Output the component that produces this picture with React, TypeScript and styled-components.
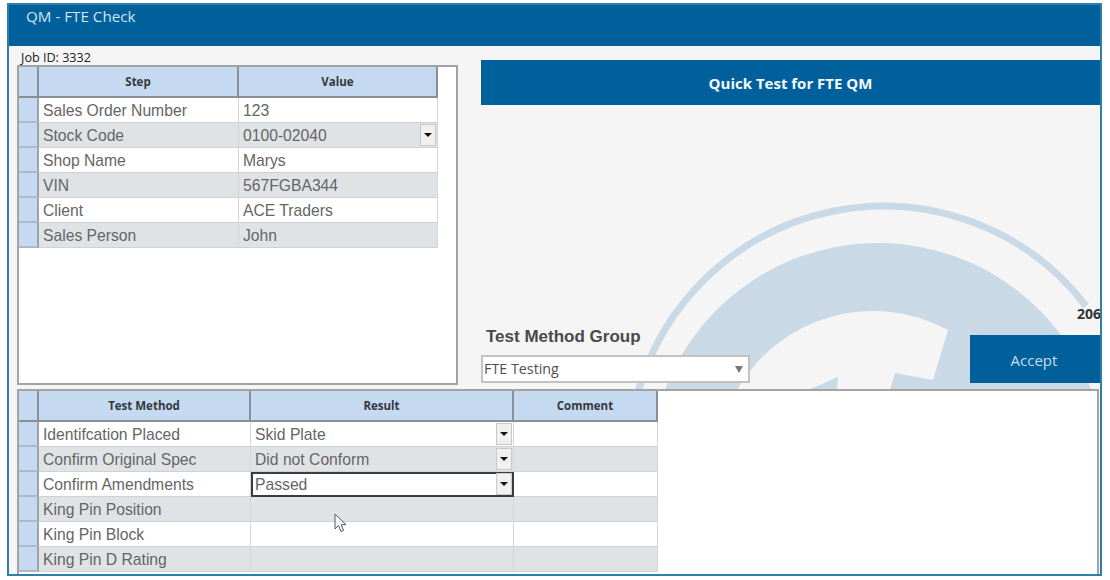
import React from "react";
import styled, { createGlobalStyle } from "styled-components";

const Global = createGlobalStyle`
  html, body { margin: 0; padding: 0; background: #ffffff; }
  body { font-family: "Liberation Sans", Arial, sans-serif; }
`;

const Page = styled.div`
  width: 1110px;
  height: 580px;
  padding: 3px 0 0 7px;
  box-sizing: border-box;
  overflow: hidden;
`;

const Window = styled.div`
  width: 1095px;
  height: 573px;
  box-sizing: border-box;
  border: 2px solid #2c80aa;
  background: #f5f5f5;
  display: flex;
  flex-direction: column;
  overflow: hidden;
`;

const TitleBar = styled.div`
  height: 41px;
  flex: none;
  background: #00609c;
  color: #d3e4ef;
  font: 400 15.2px/22px "Open Sans", sans-serif;
  padding-left: 17px;
`;

const TopArea = styled.div`
  height: 343px;
  flex: none;
  display: flex;
`;

const LeftColumn = styled.div`
  width: 461px;
  flex: none;
  padding-left: 8px;
  box-sizing: border-box;
`;

const JobLabel = styled.div`
  height: 19px;
  padding: 4px 0 0 4px;
  box-sizing: border-box;
  font: 400 12.6px/16px "Open Sans", sans-serif;
  color: #222222;
  white-space: nowrap;
`;

const GridPanel = styled.div`
  width: 441px;
  height: 320px;
  box-sizing: border-box;
  border: 2px solid #a3a3a3;
  background: #ffffff;
`;

const RightColumn = styled.div`
  position: relative;
  flex: 1;
  min-width: 0;
  overflow: hidden;
  display: flex;
  flex-direction: column;
  padding: 14px 0 6px 11px;
  box-sizing: border-box;
`;

const Watermark = styled.svg`
  position: absolute;
  left: 0;
  top: 0;
  width: 630px;
  height: 343px;
`;

const Banner = styled.div`
  position: relative;
  height: 45px;
  flex: none;
  background: #00609c;
  color: #f4f8fb;
  font: 700 15px/47px "Open Sans", sans-serif;
  text-align: center;
`;

const Footer = styled.div`
  position: relative;
  margin-top: auto;
  display: flex;
  justify-content: space-between;
  align-items: flex-end;
`;

const GroupField = styled.div`
  display: flex;
  flex-direction: column;
`;

const GroupLabel = styled.div`
  font: 700 17px/22px "Liberation Sans", sans-serif;
  color: #4a4a4a;
  padding-left: 5px;
  margin-bottom: 7px;
`;

const SelectBox = styled.div`
  width: 269px;
  height: 28px;
  box-sizing: border-box;
  border: 2px solid #c2c2c2;
  background: #ffffff;
  display: flex;
  align-items: center;
  justify-content: space-between;
  padding: 0 4px 0 1px;
  font: 400 14.3px/24px "Open Sans", sans-serif;
  color: #505050;
`;

const SelectArrow = styled.span`
  width: 0;
  height: 0;
  border-left: 4px solid transparent;
  border-right: 4px solid transparent;
  border-top: 7px solid #777777;
  margin-right: 1px;
`;

const Actions = styled.div`
  width: 130px;
  flex: none;
  display: flex;
  flex-direction: column;
`;

const Count = styled.div`
  font: 700 14px/20px "Open Sans", sans-serif;
  color: #333333;
  padding-left: 107px;
  white-space: nowrap;
  margin-bottom: 11px;
`;

const AcceptButton = styled.div`
  height: 48px;
  padding-right: 2px;
  box-sizing: border-box;
  background: #00609c;
  color: #c8dcea;
  font: 400 15px/50px "Open Sans", sans-serif;
  text-align: center;
`;

const BottomPanel = styled.div`
  position: relative;
  flex: 1;
  min-height: 0;
  margin: 0 1px 0 8px;
  box-sizing: border-box;
  border: 2px solid #a3a3a3;
  border-bottom: 0;
  background: #ffffff;
  overflow: hidden;
`;

const Grid = styled.div<{ $cols: string }>`
  display: grid;
  grid-template-columns: ${(p) => p.$cols};
  grid-template-rows: 31px;
  grid-auto-rows: 25px;
  width: max-content;
`;

const Corner = styled.div`
  box-sizing: border-box;
  background: #c5d9f1;
  border-right: 2px solid #8a8f96;
  border-bottom: 2px solid #8a8f96;
`;

const HeadCell = styled.div`
  box-sizing: border-box;
  background: #c5d9f1;
  border-right: 2px solid #8a8f96;
  border-bottom: 2px solid #8a8f96;
  display: flex;
  align-items: center;
  justify-content: center;
  font: 700 11.5px/14px "Open Sans", sans-serif;
  color: #33383d;
`;

const RowGroup = styled.div`
  display: contents;
`;

const RowHeader = styled.div`
  box-sizing: border-box;
  background: #c5d9f1;
  border-right: 2px solid #9aa3ad;
  border-bottom: 2px solid #aeb8c6;
`;

const Cell = styled.div<{ $alt: boolean; $active?: boolean }>`
  position: relative;
  box-sizing: border-box;
  background: ${(p) => (p.$alt ? "#e0e3e5" : "#ffffff")};
  border-right: 1px solid #d4d6d8;
  border-bottom: 1px solid #cfd2d4;
  padding-left: 4px;
  font: 400 15.7px/25px "Liberation Sans", sans-serif;
  color: #656565;
  white-space: nowrap;
  ${(p) => p.$active && "outline: 2px solid #3c3c3c; outline-offset: -2px; z-index: 1;"}
`;

const DropButton = styled.span`
  position: absolute;
  right: 1px;
  top: 1px;
  bottom: 1px;
  width: 16px;
  box-sizing: border-box;
  background: #f0f0f0;
  border: 1px solid #c9c9c9;
  display: flex;
  align-items: center;
  justify-content: center;
  &::after {
    content: "";
    border-left: 4px solid transparent;
    border-right: 4px solid transparent;
    border-top: 4px solid #111111;
  }
`;

const Pointer = styled.svg`
  position: absolute;
  left: 315px;
  top: 122px;
  width: 14px;
  height: 21px;
  z-index: 2;
`;

type CellData = { text?: string; drop?: boolean; active?: boolean };

function DataGrid({ cols, head, rows }: { cols: string; head: string[]; rows: CellData[][] }) {
  return (
    <Grid $cols={cols}>
      <RowGroup>
        <Corner />
        {head.map((h) => (
          <HeadCell key={h}>{h}</HeadCell>
        ))}
      </RowGroup>
      {rows.map((row, i) => (
        <RowGroup key={i}>
          <RowHeader />
          {row.map((c, j) => (
            <Cell key={j} $alt={i % 2 === 1} $active={c.active}>
              {c.text}
              {c.drop && <DropButton />}
            </Cell>
          ))}
        </RowGroup>
      ))}
    </Grid>
  );
}

const stepRows: CellData[][] = [
  [{ text: "Sales Order Number" }, { text: "123" }],
  [{ text: "Stock Code" }, { text: "0100-02040", drop: true }],
  [{ text: "Shop Name" }, { text: "Marys" }],
  [{ text: "VIN" }, { text: "567FGBA344" }],
  [{ text: "Client" }, { text: "ACE Traders" }],
  [{ text: "Sales Person" }, { text: "John" }],
];

const testRows: CellData[][] = [
  [{ text: "Identifcation Placed" }, { text: "Skid Plate", drop: true }, {}],
  [{ text: "Confirm Original Spec" }, { text: "Did not Conform", drop: true }, {}],
  [{ text: "Confirm Amendments" }, { text: "Passed", drop: true, active: true }, {}],
  [{ text: "King Pin Position" }, {}, {}],
  [{ text: "King Pin Block" }, {}, {}],
  [{ text: "King Pin D Rating" }, {}, {}],
];

export default function App() {
  return (
    <Page>
      <Global />
      <Window>
        <TitleBar>QM - FTE Check</TitleBar>
        <TopArea>
          <LeftColumn>
            <JobLabel>Job ID: 3332</JobLabel>
            <GridPanel>
              <DataGrid cols="20px 200px 199px" head={["Step", "Value"]} rows={stepRows} />
            </GridPanel>
          </LeftColumn>
          <RightColumn>
            <Watermark viewBox="470 46 630 343" aria-hidden="true">
              <circle cx="878" cy="471" r="228" fill="#c9dae6" />
              <path
                d="M636 400 A255 255 0 0 1 1086 306"
                fill="none"
                stroke="#c9dae6"
                strokeWidth="7"
              />
              <path
                d="M737 390 A157 157 0 0 1 948 330 L933 380 L895 373 L890 390 Z"
                fill="#f5f5f5"
              />
              <path d="M838 377 L808 390 L837 390 Z" fill="#c9dae6" />
            </Watermark>
            <Banner>Quick Test for FTE QM</Banner>
            <Footer>
              <GroupField>
                <GroupLabel>Test Method Group</GroupLabel>
                <SelectBox>
                  FTE Testing
                  <SelectArrow />
                </SelectBox>
              </GroupField>
              <Actions>
                <Count>206</Count>
                <AcceptButton>Accept</AcceptButton>
              </Actions>
            </Footer>
          </RightColumn>
        </TopArea>
        <BottomPanel>
          <DataGrid
            cols="20px 212px 263px 144px"
            head={["Test Method", "Result", "Comment"]}
            rows={testRows}
          />
          <Pointer viewBox="0 0 14 21" aria-hidden="true">
            <path
              d="M1 1 L1 16 L4.5 12.6 L7 18.5 L9.6 17.4 L7.2 11.8 L12 11.6 Z"
              fill="#f4f6f7"
              stroke="#55595c"
              strokeWidth="1"
            />
          </Pointer>
        </BottomPanel>
      </Window>
    </Page>
  );
}
